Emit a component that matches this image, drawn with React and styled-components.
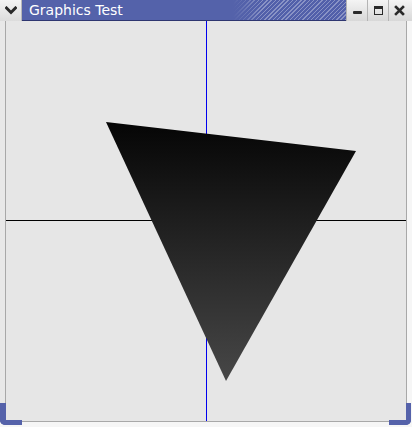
import React from "react";
import styled, { createGlobalStyle } from "styled-components";

const Global = createGlobalStyle`
  html, body { margin: 0; padding: 0; background: #e6e6e6; }
  body { font-family: "DejaVu Sans", "Liberation Sans", sans-serif; }
`;

const Window = styled.div`
  position: relative;
  width: 412px;
  height: 427px;
  display: flex;
  flex-direction: column;
  background: #ececec;
  overflow: hidden;
`;

const TitleBar = styled.div`
  display: flex;
  height: 21px;
  flex: none;
`;

const MenuButton = styled.div`
  width: 22px;
  height: 21px;
  display: flex;
  align-items: center;
  justify-content: center;
  background: linear-gradient(#f4f4f4, #dcdcdc);
  border-right: 1px solid #b8b8b8;
  box-sizing: border-box;
`;

const TitleArea = styled.div`
  flex: 1;
  display: flex;
  align-items: center;
  padding-left: 7px;
  box-sizing: border-box;
  border-bottom: 1px solid #2e3670;
  background:
    repeating-linear-gradient(135deg, rgba(255,255,255,0) 0 2px, rgba(255,255,255,0.32) 2px 3px),
    #5260aa;
  position: relative;
  &::before {
    content: "";
    position: absolute;
    left: 0; top: 0; bottom: 0;
    width: 240px;
    background: linear-gradient(90deg, #5462aa 0, #5462aa 88%, rgba(84,98,170,0) 100%);
  }
`;

const TitleText = styled.span`
  position: relative;
  color: #ffffff;
  font-size: 14px;
  line-height: 1;
  font-family: "DejaVu Sans", sans-serif;
`;

const WinButton = styled.div`
  width: 21px;
  height: 21px;
  display: flex;
  align-items: center;
  justify-content: center;
  background: linear-gradient(#f4f4f4, #d8d8d8);
  border-left: 1px solid #b4b4b4;
  box-sizing: border-box;
  &:last-child { width: 24px; padding-right: 3px; }
`;

const Body = styled.div`
  display: flex;
  flex: 1;
`;

const SideFrame = styled.div`
  width: ${p => p.$w}px;
  background: ${p => p.$bg};
  flex: none;
`;

const Canvas = styled.div`
  width: 400px;
  height: 400px;
  background: #e6e6e6;
  border-left: 1px solid #a8a8a8;
  border-right: 1px solid #a8a8a8;
  border-bottom: 1px solid #a8a8a8;
  flex: none;
`;

const BottomFrame = styled.div`
  height: 5px;
  flex: none;
  background: #f6f6f6;
`;

const Corner = styled.div`
  position: absolute;
  z-index: 2;
  bottom: 2px;
  ${p => (p.$right ? "right: 1px;" : "left: 0;")}
  width: 22px;
  height: 22px;
  box-sizing: border-box;
  border-bottom: 5px solid #5562aa;
  ${p => (p.$right ? "border-right: 5px solid #5562aa;" : "border-left: 6px solid #5562aa;")}
  ${p => (p.$right ? "border-bottom-right-radius: 5px;" : "border-bottom-left-radius: 5px;")}
`;

export default function App() {
  return (
    <>
      <Global />
      <Window>
        <TitleBar>
          <MenuButton>
            <svg width="12" height="9" viewBox="0 0 12 9">
              <path d="M1.5 2 L6 6.5 L10.5 2" fill="none" stroke="#2a2a2a" strokeWidth="3" strokeLinecap="square" />
            </svg>
          </MenuButton>
          <TitleArea>
            <TitleText>Graphics Test</TitleText>
          </TitleArea>
          <WinButton>
            <svg width="11" height="10" viewBox="0 0 11 10">
              <rect x="1" y="5" width="9" height="3" rx="1" fill="#2a2a2a" />
            </svg>
          </WinButton>
          <WinButton>
            <svg width="11" height="11" viewBox="0 0 11 11">
              <rect x="1.5" y="1.5" width="8" height="8" fill="none" stroke="#2a2a2a" strokeWidth="1" />
              <rect x="1" y="1" width="9" height="3" fill="#2a2a2a" />
            </svg>
          </WinButton>
          <WinButton>
            <svg width="11" height="11" viewBox="0 0 11 11">
              <path d="M2 2 L9 9 M9 2 L2 9" stroke="#2a2a2a" strokeWidth="2.6" strokeLinecap="square" />
            </svg>
          </WinButton>
        </TitleBar>
        <Body>
          <SideFrame $w={5} $bg="#e8e8e8" />
          <Canvas>
            <svg width="400" height="400" viewBox="0 0 400 400" style={{ display: "block" }}>
              <defs>
                <linearGradient id="tri" x1="0" y1="101" x2="0" y2="360" gradientUnits="userSpaceOnUse">
                  <stop offset="0" stopColor="#050505" />
                  <stop offset="1" stopColor="#474747" />
                </linearGradient>
              </defs>
              <line x1="0" y1="199.5" x2="400" y2="199.5" stroke="#000" strokeWidth="1" />
              <line x1="200.5" y1="0" x2="200.5" y2="400" stroke="#0000ee" strokeWidth="1" />
              <polygon points="100,101 350,130 220,360" fill="url(#tri)" />
            </svg>
          </Canvas>
          <SideFrame $w={5} $bg="#f6f6f6" />
        </Body>
        <BottomFrame />
        <Corner />
        <Corner $right />
      </Window>
    </>
  );
}
